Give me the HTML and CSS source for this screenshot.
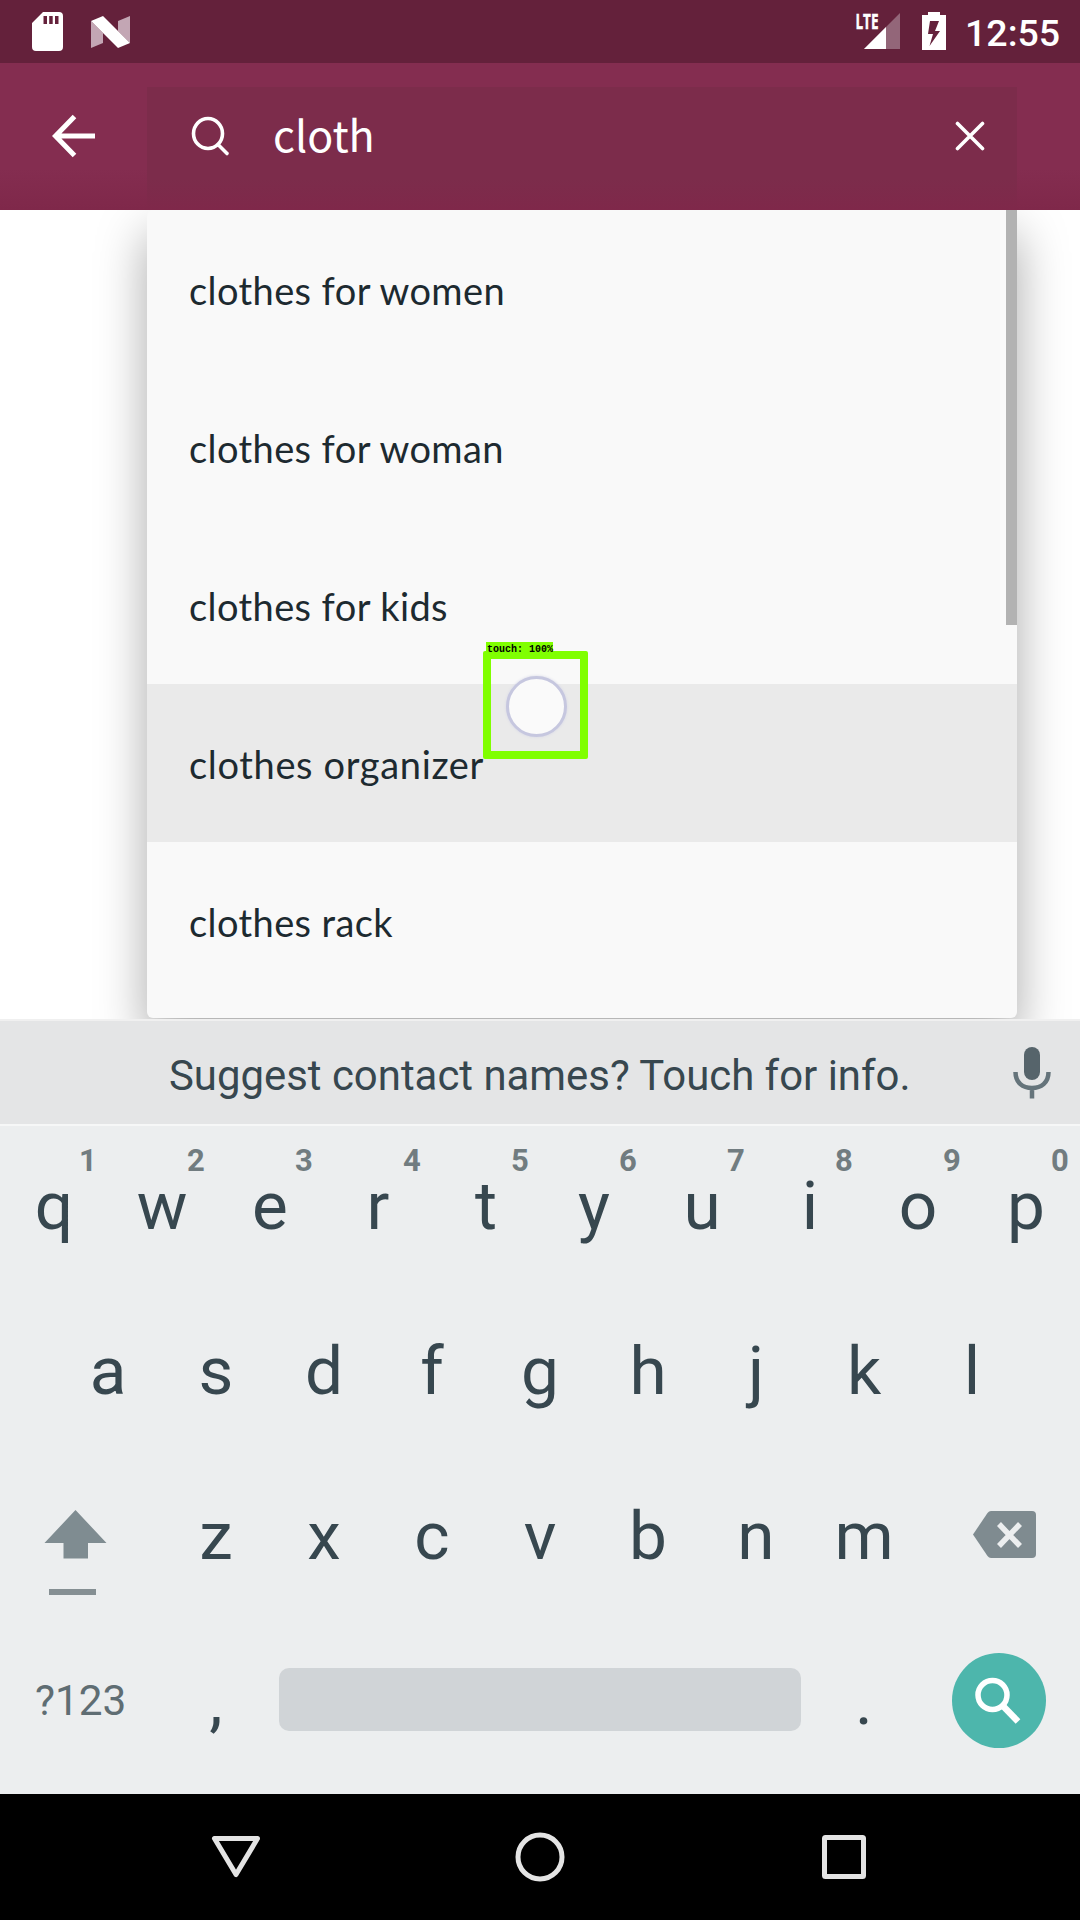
FILE: index.html
```html
<!DOCTYPE html>
<html lang="en">
<head>
<meta charset="utf-8">
<title>Search</title>
<link rel="stylesheet" href="styles.css">
</head>
<body>
<div class="screen">
  <div class="status">
    <svg class="sd" width="31" height="40" viewBox="0 0 31 40"><path fill="#fff" fill-rule="evenodd" d="M11 0H27Q31 0 31 4V35Q31 39 27 39H4Q0 39 0 35V11ZM11.500 4V12H15V4ZM17.200 4V12H20.700V4ZM23 4V12H26.500V4Z"/></svg>
    <svg class="nougat" width="39" height="32" viewBox="0 0 39 32"><path fill="#c3a6b4" d="M0 5L12 17V27L0 32ZM27 5L39 0V27L27 15Z"/><path fill="#fff" d="M0 5L12 0L39 27L27 32Z"/></svg>
    <svg class="signal" width="46" height="50" viewBox="0 -12 46 50"><path fill="#936679" d="M45 1V37H9Z"/><path fill="#fff" d="M31 15V37H9Z"/><text class="lte" x="0.500" y="17" textLength="23" lengthAdjust="spacingAndGlyphs">LTE</text></svg>
    <svg class="battery" width="24" height="38" viewBox="0 0 24 38"><path fill="#fff" fill-rule="evenodd" d="M6 0H18V3H24V38H0V3H6ZM8 9L6 22H11L7.500 34L18 19H13L17 9Z"/></svg>
    <span class="clock">12:55</span>
  </div>

  <div class="appbar">
    <div class="back"><svg width="44" height="44" viewBox="0 0 44 44"><path d="M43 22H5M22.500 2.500L3.500 22L22.500 41.500" fill="none" stroke="#fff" stroke-width="5"/></svg></div>
    <div class="field">
      <svg width="40" height="42" viewBox="0 0 40 42"><g fill="none" stroke="#fff" stroke-width="3.600" stroke-linecap="round"><ellipse cx="17" cy="18.500" rx="14.500" ry="15"/><path d="M27.500 30L36 38.500"/></g></svg>
      <span class="query">cloth</span>
      <svg width="30" height="30" viewBox="0 0 30 30"><path d="M2.500 2.500L27.500 27.500M27.500 2.500L2.500 27.500" stroke="#fff" stroke-width="3.600" stroke-linecap="round"/></svg>
    </div>
  </div>

  <div class="content">
    <div class="dropdown">
      <div class="item"><span>clothes for women</span></div>
      <div class="item"><span>clothes for woman</span></div>
      <div class="item"><span>clothes for kids</span></div>
      <div class="item pressed"><span>clothes organizer</span></div>
      <div class="item"><span>clothes rack</span></div>
      <div class="scrollbar"></div>
    </div>
    <div class="touch-box"><span class="touch-label">touch: 100%</span><div class="touch-dot"></div></div>
  </div>

  <div class="keyboard">
    <div class="suggest">
      <span class="tip">Suggest contact names? Touch for info.</span>
      <svg class="mic" width="38" height="52" viewBox="0 0 38 52"><rect x="11" y="0" width="16" height="33" rx="8" fill="#56646b"/><path d="M2.500 25C2.500 36 10 41 19 41S35.500 36 35.500 25M19 41V51.500" fill="none" stroke="#65747b" stroke-width="4.500"/></svg>
    </div>
    <div class="row">
      <div class="key">q<sup>1</sup></div><div class="key">w<sup>2</sup></div><div class="key">e<sup>3</sup></div><div class="key">r<sup>4</sup></div><div class="key">t<sup>5</sup></div><div class="key">y<sup>6</sup></div><div class="key">u<sup>7</sup></div><div class="key">i<sup>8</sup></div><div class="key">o<sup>9</sup></div><div class="key">p<sup>0</sup></div>
    </div>
    <div class="row">
      <div class="key">a</div><div class="key">s</div><div class="key">d</div><div class="key">f</div><div class="key">g</div><div class="key">h</div><div class="key">j</div><div class="key">k</div><div class="key">l</div>
    </div>
    <div class="row">
      <div class="side shift"><svg width="64" height="88" viewBox="0 0 64 88"><path fill="#7f8c91" d="M31.500 1L62.500 34H44V49.500H19.500V34H0.500Z"/><path fill="#858f93" d="M5 80H52V86H5Z"/></svg></div>
      <div class="key">z</div><div class="key">x</div><div class="key">c</div><div class="key">v</div><div class="key">b</div><div class="key">n</div><div class="key">m</div>
      <div class="side delete"><svg width="64" height="48" viewBox="0 0 64 48"><path fill="#7f8b90" d="M18 0H59Q63 0 63 4V43Q63 47 59 47H18Q16 47 14.500 45L0 23.500L14.500 2Q16 0 18 0Z"/><path d="M26 13L47 35M47 13L26 35" stroke="#eceeef" stroke-width="5.500"/></svg></div>
    </div>
    <div class="row">
      <div class="side symbols">?123</div>
      <div class="key">,</div>
      <div class="space"></div>
      <div class="key period">.</div>
      <div class="enter"><svg width="46" height="48" viewBox="0 0 46 48"><g fill="none" stroke="#fff"><circle cx="17.500" cy="18" r="14.500" stroke-width="5.500"/><path d="M28 29L43 44.500" stroke-width="6.500"/></g></svg></div>
    </div>
  </div>

  <div class="nav">
    <svg width="52" height="52" viewBox="0 0 52 52"><path d="M4.500 7.500H47.500L26 43.500Z" fill="none" stroke="#e4e4e4" stroke-width="5" stroke-linejoin="round"/></svg>
    <svg width="52" height="52" viewBox="0 0 52 52"><circle cx="26" cy="26" r="22" fill="none" stroke="#e4e4e4" stroke-width="5"/></svg>
    <svg width="52" height="52" viewBox="0 0 52 52"><rect x="6.500" y="6.500" width="39" height="39" rx="1" fill="none" stroke="#e4e4e4" stroke-width="5"/></svg>
  </div>
</div>
</body>
</html>
```
FILE: styles.css
```css
* { box-sizing: border-box; }
body { margin: 0; font-family: Roboto, sans-serif; background: #fff; }
svg { display: block; flex: none; }
.screen { width: 1080px; height: 1920px; display: flex; flex-direction: column; overflow: hidden; }

.status { height: 63px; background: #64213b; display: flex; align-items: flex-start; padding: 0 21px 0 32px; }
.sd { margin-top: 12px; }
.nougat { margin: 16px 0 0 28px; }
.signal { margin-left: auto; overflow: visible; }
.lte { font: 700 22px "Open Sans", sans-serif; fill: #fff; stroke: #fff; stroke-width: .5px; }
.battery { margin: 12px 0 0 21px; }
.clock { margin: 12px 0 0 19px; color: #fff; font-size: 37.5px; font-weight: 500; line-height: 43px; width: 94px; white-space: nowrap; }

.appbar { height: 147px; background: linear-gradient(#842d50 0 72%, #7f284a); display: flex; }
.back { width: 147px; padding: 51px 0 0 52px; }
.field { width: 870px; margin-top: 24px; height: 123px; background: linear-gradient(#7c2c4b 0 75%, #7f284a); display: flex; align-items: center; padding: 0 32px 26px 44px; }
.query { flex: 1; padding: 0 0 6px 42px; color: #fff; font: 400 43px/60px "Noto Sans CJK JP", sans-serif; }

.content { height: 809px; position: relative; overflow: hidden; }
.dropdown { position: relative; width: 870px; height: 808px; margin-left: 147px; background: #f9f9f9; border-radius: 6px; box-shadow: 0 24px 50px rgba(0, 0, 0, .34); }
.item { height: 158px; padding: 2px 42px 0; display: flex; align-items: center; color: #1d2a30; font: 400 38px/46px Lato, sans-serif; letter-spacing: .4px; white-space: nowrap; }
.pressed { background: #eaeaea; letter-spacing: .65px; }
.scrollbar { position: absolute; right: 0; top: 0; width: 11px; height: 415px; background: #b2b2b2; }
.touch-box { position: absolute; left: 483px; top: 441px; width: 105px; height: 108px; border: 8px solid #80ff00; border-radius: 2px; }
.touch-label { position: absolute; left: -5px; top: -17px; width: 67px; height: 14px; padding: 1px 0 0 1px; background: #80ff00; color: #000; font: 700 10px/13px "Liberation Mono", monospace; white-space: nowrap; }
.touch-dot { position: absolute; left: 15px; top: 17px; width: 61px; height: 61px; border: 3px solid #c6c7df; border-radius: 50%; background: #fafafa; box-shadow: 0 0 3px #d5d6e6; }

.keyboard { height: 775px; background: #eceeef; color: #37474f; }
.suggest { height: 107px; border-top: 2px solid #f0f0f0; border-bottom: 2px solid #f6f7f7; background: #e4e5e6; display: flex; align-items: center; padding: 0 29px 0 169px; }
.tip { flex: 1; padding-top: 5px; font-size: 41.9px; white-space: nowrap; }
.row { height: 165px; display: flex; justify-content: center; }
.key { position: relative; width: 108px; text-align: center; font-size: 67.5px; line-height: 160px; }
.key sup { position: absolute; left: 79px; top: 19px; font-size: 31px; font-weight: 700; line-height: 31px; color: #717c80; }
.side { width: 162px; }
.shift { padding: 53px 0 0 44px; }
.delete { padding: 55px 0 0 55px; }
.symbols { padding-left: 35px; font-size: 42.3px; line-height: 160px; color: #5f6d73; }
.space { width: 522px; height: 63px; margin: 47px 9px 0; border-radius: 10px; background: #d0d4d7; }
.enter { width: 94px; height: 95px; margin: 32px 34px 0; border-radius: 50%; background: #4db6ac; padding: 24px 0 0 23px; }

.nav { height: 126px; background: #000; display: flex; justify-content: center; gap: 252px; padding-top: 37px; }
```
